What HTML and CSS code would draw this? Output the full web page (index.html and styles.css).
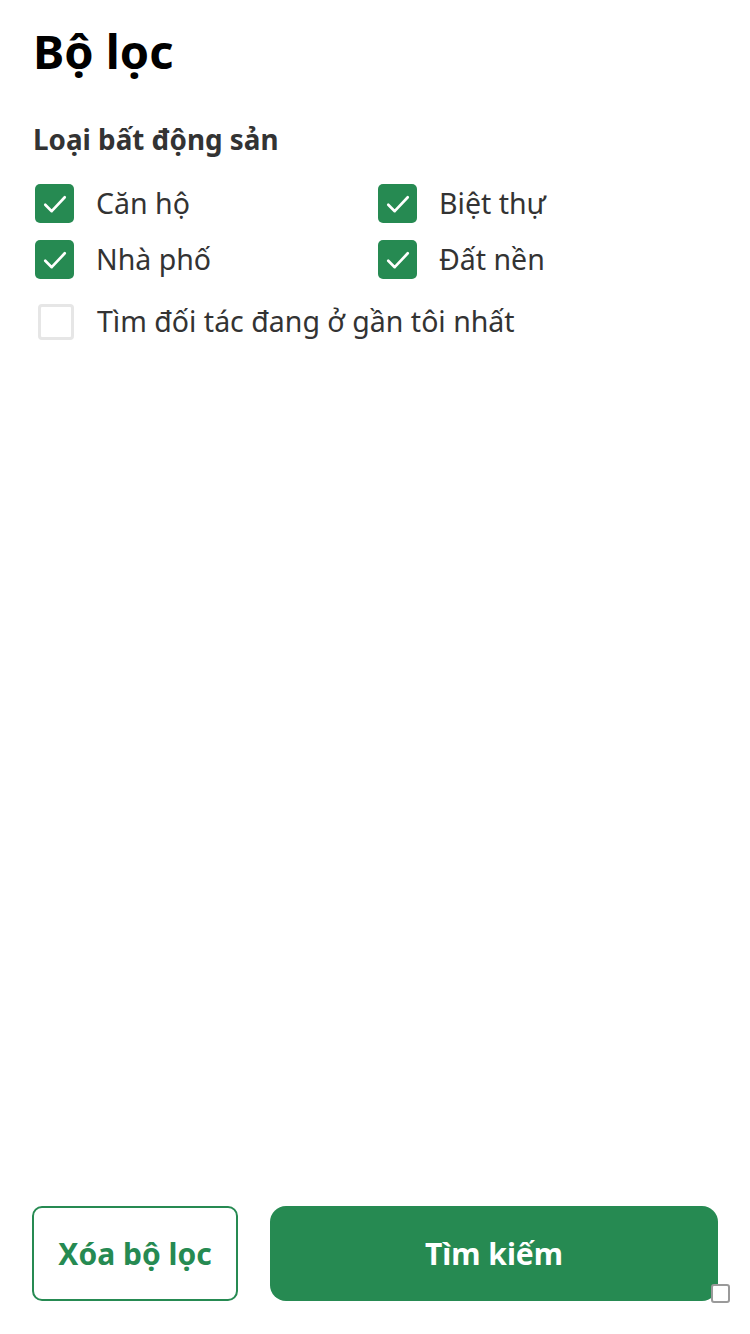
FILE: index.html
```html
<!DOCTYPE html>
<html lang="vi">
<head>
<meta charset="utf-8">
<link rel="stylesheet" href="styles.css">
</head>
<body>
<div class="page">
  <main class="content">
    <h1 class="title">Bộ lọc</h1>
    <h2 class="section">Loại bất động sản</h2>
    <div class="grid">
      <label class="opt"><span class="box on"><svg viewBox="0 0 24 24"><path d="M5.5 12.5l4.3 4.3L18.5 7.5" /></svg></span><span class="txt">Căn hộ</span></label>
      <label class="opt"><span class="box on"><svg viewBox="0 0 24 24"><path d="M5.5 12.5l4.3 4.3L18.5 7.5" /></svg></span><span class="txt">Biệt thự</span></label>
      <label class="opt"><span class="box on"><svg viewBox="0 0 24 24"><path d="M5.5 12.5l4.3 4.3L18.5 7.5" /></svg></span><span class="txt">Nhà phố</span></label>
      <label class="opt"><span class="box on"><svg viewBox="0 0 24 24"><path d="M5.5 12.5l4.3 4.3L18.5 7.5" /></svg></span><span class="txt">Đất nền</span></label>
    </div>
    <label class="opt near"><span class="box off"></span><span class="txt">Tìm đối tác đang ở gần tôi nhất</span></label>
  </main>
  <footer class="actions">
    <button class="btn clear">Xóa bộ lọc</button>
    <button class="btn search">Tìm kiếm</button>
    <span class="corner"></span>
  </footer>
</div>
</body>
</html>
```
FILE: styles.css
```css
html, body {
  margin: 0;
  padding: 0;
  background: #fff;
}
body {
  font-family: "Noto Sans", "Open Sans", sans-serif;
  color: #333;
}
.page {
  width: 750px;
  height: 1334px;
  display: flex;
  flex-direction: column;
  box-sizing: border-box;
}
.content {
  flex: 1;
  padding: 0 33px;
}
.title {
  margin: 0;
  padding-top: 21px;
  font-size: 47px;
  line-height: 60px;
  font-weight: 700;
  color: #000;
}
.section {
  margin: 0;
  padding-top: 40px;
  font-size: 27.8px;
  line-height: 36px;
  font-weight: 700;
  color: #333;
}
.grid {
  margin-top: 27px;
  display: grid;
  grid-template-columns: 343px 1fr;
  row-gap: 17px;
}
.opt {
  display: flex;
  align-items: center;
  gap: 22px;
  font-size: 28.5px;
  line-height: 39px;
  color: #333;
}
.box {
  width: 39px;
  height: 39px;
  box-sizing: border-box;
  border-radius: 5px;
  display: flex;
  align-items: center;
  justify-content: center;
  margin-left: 2px;
}
.box.on {
  background: #268a52;
}
.box svg {
  width: 36px;
  height: 36px;
  flex: none;
  fill: none;
  stroke: #fff;
  stroke-width: 1.75;
  stroke-linecap: round;
  stroke-linejoin: round;
}
.box.off {
  width: 36px;
  height: 36px;
  border: 3px solid #e6e6e6;
  margin-left: 5px;
  margin-right: 1px;
  border-radius: 4px;
}
.near {
  margin-top: 23px;
}
.actions {
  position: relative;
  display: flex;
  gap: 32px;
  padding: 0 32px 33px 32px;
}
.btn {
  height: 95px;
  font-family: inherit;
  font-size: 30px;
  font-weight: 700;
  border-radius: 10px;
  cursor: pointer;
}
.clear {
  width: 206px;
  background: #fff;
  color: #268a52;
  border: 2px solid #268a52;
}
.search {
  flex: 1;
  background: #268a52;
  color: #fff;
  border: none;
  border-radius: 16px;
}
.corner {
  position: absolute;
  left: 711px;
  top: 78px;
  width: 19px;
  height: 19px;
  box-sizing: border-box;
  border: 2px solid #9a9a9a;
  border-radius: 3px;
  background: #fff;
}
```
